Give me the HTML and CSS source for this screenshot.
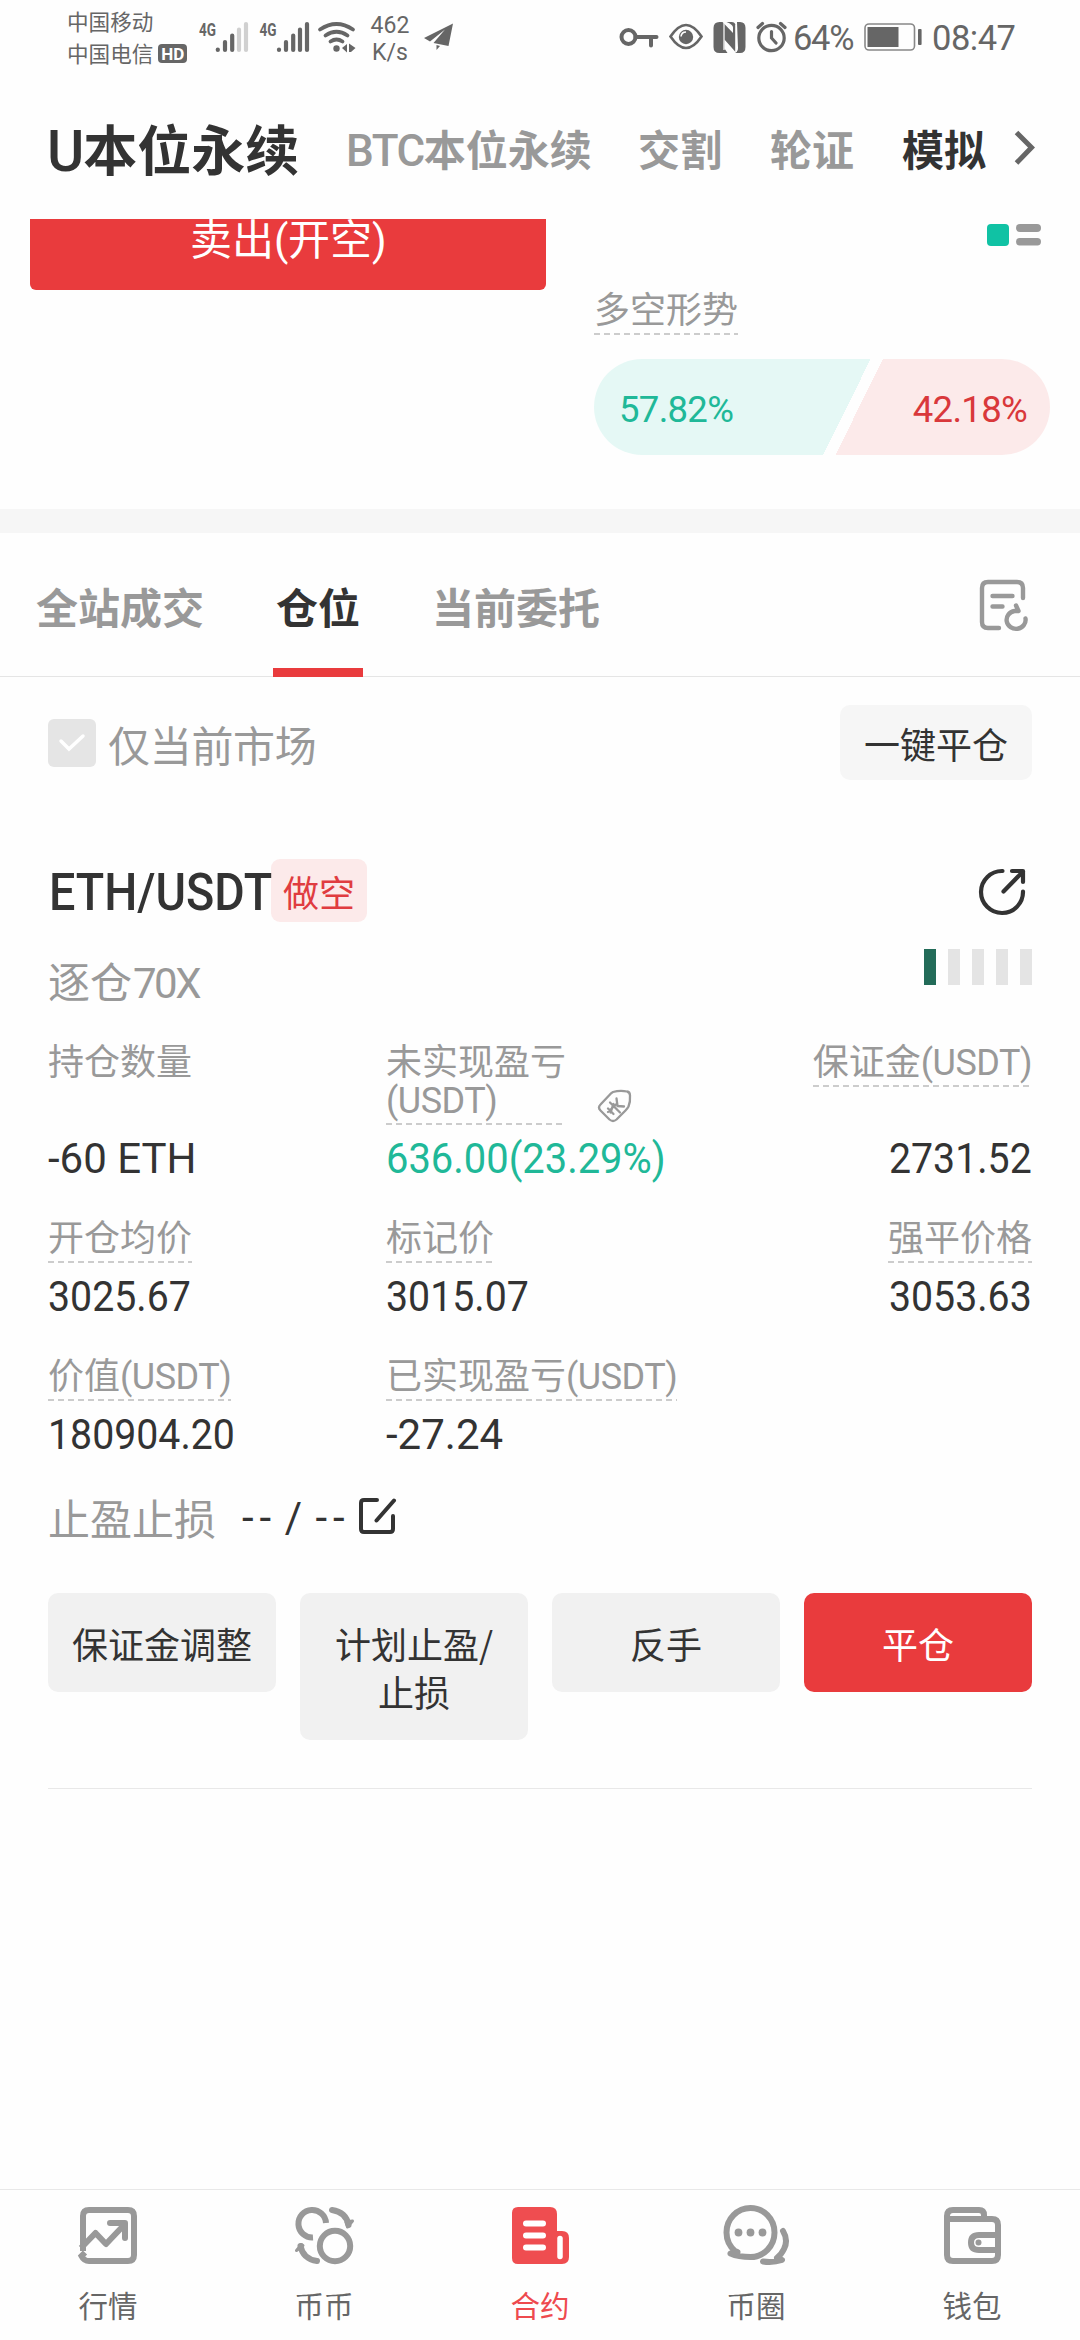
FILE: index.html
```html
<!DOCTYPE html>
<html lang="zh-CN">
<head>
<meta charset="utf-8">
<title>合约</title>
<link rel="stylesheet" href="styles.css">
</head>
<body>
<div class="screen">
  <header class="status">
    <div class="carriers">
      <div>中国移动</div>
      <div class="carrier2">中国电信<span class="hd">HD</span></div>
    </div>
    <svg class="sig" width="50" height="32" viewBox="199 21 50 32"><text x="199" y="36" class="g4" textLength="17" lengthAdjust="spacingAndGlyphs">4G</text><g stroke="#666" stroke-width="4.2" stroke-linecap="round"><path d="M217.8 49.6v.4M225 42v8M232.2 35.500v14.500"/><path stroke="#d0d0d0" d="M239 29.500V50M246 24v26"/></g></svg>
    <svg class="sig2" width="51" height="32" viewBox="259 21 51 32"><text x="259.500" y="36" class="g4" textLength="17" lengthAdjust="spacingAndGlyphs">4G</text><g stroke="#666" stroke-width="4.2" stroke-linecap="round"><path d="M279 49.600v.4M286 42v8M293.200 35.500v14.500M300 29.500V50M307 24v26"/></g></svg>
    <svg class="wifi" width="38" height="32" viewBox="318 21 38 32" fill="none" stroke="#666" stroke-width="3.800" stroke-linecap="round"><path d="M320 29.500Q336.500 18.500 353 29.500M325.500 35.500Q336.500 28 347.500 35.500M330.500 41.500Q336.500 37.500 342.500 41.500"/><circle cx="336.500" cy="48.500" r="3.200" fill="#666" stroke="none"/><path fill="#666" stroke="none" d="M342 48l5-4v8.500zM349 43.500l6.500 4.500-4.500 4h-2z"/></svg>
    <div class="speed"><div>462</div><div>K/s</div></div>
    <svg class="plane" width="30" height="28" viewBox="424 24 30 28" fill="#666"><path d="M453 24.500 424 39l6 3.500 15-12-11.500 13.500 15 3z"/><path d="M436.500 46l3.500 1-3.500 4z"/></svg>
    <span class="grow"></span>
    <svg class="key" width="39" height="20" viewBox="618.500 27 39 20" fill="none" stroke="#666" stroke-width="4"><circle cx="628" cy="37" r="7"/><path d="M635 37h21M650.500 37v8.500" stroke-linecap="round"/></svg>
    <svg class="eye" width="34" height="28" viewBox="668.500 23 34 28"><path d="M670 36.500Q685.500 13.500 701 36.500Q685.500 59.500 670 36.500z" fill="none" stroke="#666" stroke-width="2.600"/><circle cx="685.500" cy="37" r="7.200" fill="#666"/><path d="M680.500 36.500q.5-4.500 5-4.500" fill="none" stroke="#fff" stroke-width="1.600"/></svg>
    <svg class="nfc" width="33" height="33" viewBox="712.500 20.500 33 33"><path fill="#666" d="M719 21.500h3l11 11.500v11.500l-9-9.500v13l3 4.500h-8q-6 0-6-6V27.500q0-6 6-6zM726 21.500h5q4 0 4 4v26l-11.500-13v-9l9 9V27q0-3-6.500-5.500zM736.500 21.500h3q5.500 0 5.500 6v19q0 6-5.500 6h-5q3-1.500 3-5z"/><path d="M723.500 22.500v27M735.500 24.500v27" stroke="#fff" stroke-width="1.200"/></svg>
    <svg class="alarm" width="31" height="32" viewBox="755.500 21 31 32" fill="none" stroke="#666" stroke-width="3.200" stroke-linecap="round"><circle cx="771" cy="38" r="12.700"/><path d="M771 31.500v6.500l4.500 5M757.500 27.500l4.500-4M784.500 27.500l-4.500-4"/></svg>
    <span class="stext pct">64%</span>
    <svg class="bat" width="58" height="29" viewBox="864 23.500 58 29"><rect x="865" y="24.500" width="49.500" height="26" rx="4" fill="none" stroke="#888" stroke-width="1.600"/><rect x="867.500" y="27.500" width="31" height="20" fill="#666"/><rect x="918" y="29.500" width="3.600" height="16" rx="1" fill="#666"/></svg>
    <span class="stext time">08:47</span>
  </header>

  <nav class="markets">
    <span class="market big"><span class="lt">U</span>本位永续</span>
    <span class="market btc"><span class="lt">BTC</span>本位永续</span>
    <span class="market">交割</span>
    <span class="market">轮证</span>
    <span class="market sel">模拟</span>
    <svg width="22" height="36" viewBox="0 0 22 36" fill="none" stroke="#666" stroke-width="5"><path d="M2.500 2.500 17.500 17.500 2.500 33"/></svg>
  </nav>

  <section class="trade">
    <div class="sell">卖出<span class="lt">(</span>开空<span class="lt">)</span></div>
    <div class="trend">
      <svg class="layout" width="55" height="24" viewBox="0 0 55 24"><rect x="0" y="1" width="22" height="22" rx="4" fill="#10c2a4"/><g fill="#999"><rect x="29" y="1" width="25" height="8" rx="4"/><rect x="29" y="15" width="25" height="7.500" rx="3.700"/></g></svg>
      <span class="label">多空形势</span>
      <div class="ratio">
        <span class="num long">57.82%</span>
        <span class="num short">42.18%</span>
      </div>
    </div>
  </section>

  <nav class="tabs">
    <span class="tab">全站成交</span>
    <span class="tab on">仓位</span>
    <span class="tab">当前委托</span>
    <svg class="history" width="50" height="52" viewBox="979 579 50 52" fill="none" stroke="#999" stroke-width="4.400" stroke-linecap="round" stroke-linejoin="round"><path d="M999 628H988q-6 0-6-6V588q0-6 6-6h29q6 0 6 6v10M992.500 596h20M992.500 606.500h10"/><path d="M1016 605.500l2.500 5.500h-4a9.500 9 0 1 0 11 7.500"/></svg>
  </nav>

  <div class="filter">
    <span class="check"><svg width="28" height="20" viewBox="0 0 28 20" fill="none" stroke="#fff" stroke-width="3.500" stroke-linecap="round"><path d="M3 8l8 8L25 3"/></svg></span>
    <span class="only">仅当前市场</span>
    <span class="close-all">一键平仓</span>
  </div>

  <main class="position">
    <div class="head">
      <span class="pair"><span class="narrow">ETH/USDT</span></span><span class="side">做空</span>
      <svg class="share" width="50" height="50" viewBox="977 867 50 50" fill="none" stroke="#333" stroke-width="4.200" stroke-linecap="round" stroke-linejoin="round"><path d="M1002.500 871a21 21 0 1 0 20.500 20.500M1003.500 891.500l19.500-20M1012 871h11v11"/></svg>
    </div>
    <div class="lever">
      <span>逐仓<span class="lt lv">70X</span></span>
      <span class="risk"><i class="hit"></i><i></i><i></i><i></i><i></i></span>
    </div>

    <div class="grid">
      <div class="cell"><span class="label plain">持仓数量</span><span class="value amount">-60 ETH</span></div>
      <div class="cell">
        <span class="pnl"><span class="label two">未实现盈亏<br><span class="lt">(USDT)</span></span>
        <svg width="36" height="36" viewBox="596 1089 36 36" fill="none" stroke="#999" stroke-width="2.300" stroke-linejoin="round" stroke-linecap="round"><path d="M612 1092q7-2 14-.5q3 .5 3 4q.5 6-1.500 11q-1 2-3 4l-9 9q-3.500 3-7 0l-9-9q-3-3 0-6l8.500-9q2-2.500 4-3.500z"/><path d="M609 1102.500l10 10M607 1108.500l5.500 5.500M612.500 1104l-3 8.500M607 1112l9-8.500M615.500 1098.500l1 7.500 6.500.5"/></svg></span>
        <span class="value up">636.00(23.29%)</span>
      </div>
      <div class="cell right"><span class="label">保证金<span class="lt">(USDT)</span></span><span class="value">2731.52</span></div>

      <div class="cell"><span class="label">开仓均价</span><span class="value">3025.67</span></div>
      <div class="cell"><span class="label">标记价</span><span class="value">3015.07</span></div>
      <div class="cell right"><span class="label">强平价格</span><span class="value">3053.63</span></div>

      <div class="cell"><span class="label">价值<span class="lt">(USDT)</span></span><span class="value">180904.20</span></div>
      <div class="cell"><span class="label">已实现盈亏<span class="lt">(USDT)</span></span><span class="value realized">-27.24</span></div>
    </div>

    <div class="tpsl">
      <span class="name">止盈止损</span><span class="dashes">-- / --</span>
      <svg width="40" height="40" viewBox="357 1495 40 40" fill="none" stroke="#333" stroke-width="4" stroke-linecap="round" stroke-linejoin="round"><path d="M377 1499h-13q-3 0-3 3v26q0 3 3 3h26q3 0 3-3v-13M394 1499.500l-17.500 20"/></svg>
    </div>

    <div class="actions">
      <span class="btn">保证金调整</span>
      <span class="btn">计划止盈/<br>止损</span>
      <span class="btn">反手</span>
      <span class="btn red">平仓</span>
    </div>
  </main>

  <footer class="bottom">
    <div class="item">
      <svg width="68" height="64" viewBox="74 2204 68 64" fill="none" stroke="#999" stroke-width="6"><path d="M83 2251V2216q0-6 6-6h39q6 0 6 6v39q0 6-6 6H89q-5 0-7.500-5l3.500-3.500"/><path d="M81 2248l14.500-15L106 2244l19-20" stroke-linejoin="round"/><path d="M110 2223h15v15" stroke-linecap="round" stroke-linejoin="round"/></svg>
      <span>行情</span>
    </div>
    <div class="item">
      <svg width="68" height="64" viewBox="290 2204 68 64" fill="none" stroke="#999" stroke-width="6"><circle cx="335" cy="2246" r="15.200"/><path d="M313 2237.500a13.800 13.800 0 1 1 13-14.500"/><path d="M332 2210q14 2 16.500 15" stroke-linecap="round"/><path d="M317 2261q-14-2-16.500-15" stroke-linecap="round"/><path fill="#999" stroke-width="3" stroke-linejoin="round" d="M346 2222l6.500-1-5 6zM303 2245.500l-6.500 5 5-6z"/></svg>
      <span>币币</span>
    </div>
    <div class="item active">
      <svg width="68" height="64" viewBox="506 2204 68 64"><path fill="#ef4d50" d="M518 2207h32q7 0 7 7v17h5q7 0 7 7v19q0 7-7 7h-44q-6 0-6-6v-45q0-6 6-6z"/><path d="M526 2223.500h17M526 2235.500h17M526 2247.500h17" stroke="#fff" stroke-width="6" stroke-linecap="round"/><path d="M560 2238.500v18" stroke="#fff" stroke-width="5.500" stroke-linecap="round"/></svg>
      <span>合约</span>
    </div>
    <div class="item">
      <svg width="68" height="64" viewBox="722 2204 68 64" fill="none" stroke="#999" stroke-width="6" stroke-linecap="round" stroke-linejoin="round"><path d="M735.500 2251.500q-9-7.500-9-19a24 24.500 0 1 1 24 24.500q-12 0-20-3.500 6 1.500 7-1.500z"/><path d="M783 2231q5.500 9 1 18-3 6-7 9l5 2q-9 3-19 1.500"/><g fill="#999" stroke="none"><circle cx="738.500" cy="2232.500" r="3.900"/><circle cx="750.500" cy="2232.500" r="3.900"/><circle cx="762.500" cy="2232.500" r="3.900"/></g></svg>
      <span>币圈</span>
    </div>
    <div class="item">
      <svg width="68" height="64" viewBox="938 2204 68 64" fill="none" stroke="#999" stroke-width="6"><path d="M984 2218v-3q0-5-5-5h-26q-6 0-6 6v39q0 6 6 6h39q6 0 6-6v-30q0-6-6-6h-45"/><path d="M998 2235h-19q-8 0-8 7.500t8 7.500h19"/><circle cx="978.500" cy="2242.500" r="3" fill="#999" stroke="none"/></svg>
      <span>钱包</span>
    </div>
  </footer>
</div>
</body>
</html>
```

FILE: styles.css
```css
* { box-sizing: border-box; }
body { margin: 0; background: #fff; }
svg { display: block; flex: none; overflow: visible; }

.screen {
  width: 1080px;
  height: 2340px;
  display: flex;
  flex-direction: column;
  overflow: hidden;
  background: #fefefe;
  color: #333;
  font-family: "Noto Sans CJK SC", sans-serif;
  white-space: nowrap;
}
.lt { font-family: Roboto, sans-serif; line-height: 0; font-weight: 400; letter-spacing: -.5px; }

/* status bar */
.status {
  height: 74px;
  padding: 0 62px 0 67px;
  display: flex;
  align-items: center;
  color: #666;
  font-family: Roboto, "Noto Sans CJK SC", sans-serif;
}
.carriers {
  width: 132px;
  font-family: "Noto Sans CJK SC", sans-serif;
  font-size: 21.600px;
  line-height: 32px;
}
.carrier2 { display: flex; align-items: center; }
.hd {
  width: 29px;
  height: 19px;
  margin-left: 5px;
  border-radius: 4px;
  background: #666;
  color: #fff;
  font: 700 17px/20px Roboto, sans-serif;
  text-align: center;
}
.g4 { font: 700 19px Roboto, sans-serif; fill: #666; }
.sig2 { margin-left: 10px; }
.wifi { margin-left: 8px; }
.speed { width: 44px; margin-left: 12px; margin-top: 3px; font-size: 23px; line-height: 27px; text-align: center; }
.plane { margin-left: 12px; }
.grow { flex: 1; }
.eye { margin-left: 11px; }
.nfc { margin-left: 10px; }
.alarm { margin-left: 10px; }
.stext { font-size: 34.500px; line-height: 40px; padding-top: 2px; }
.pct { width: 77px; padding-left: 6px; letter-spacing: -1.300px; }
.time { width: 96px; padding-left: 10px; letter-spacing: -.5px; }

/* market switcher */
.markets {
  height: 145px;
  padding: 3px 45px 0 47px;
  display: flex;
  align-items: center;
  gap: 48px;
  font-weight: 700;
}
.market { font-size: 42px; color: #999; line-height: 60px; }
.market .lt { font-size: 44px; font-weight: 500; letter-spacing: -1.500px; }
.market.big { width: 251px; font-size: 54px; color: #333; }
.market.big .lt { font-size: 57px; letter-spacing: -1px; }
.market.btc { width: 244px; }
.market.sel { color: #333; }
.markets svg { margin-left: -20px; }

/* order form tail */
.trade {
  height: 290px;
  padding: 0 30px;
  display: flex;
  justify-content: space-between;
}
.sell {
  width: 516px;
  height: 71px;
  border-radius: 0 0 6px 6px;
  background: #e93b3d;
  color: #fff;
  font-size: 42px;
  line-height: 35px;
  text-align: center;
}
.trend { width: 456px; display: flex; flex-direction: column; align-items: flex-start; padding-top: 4px; }
.layout { align-self: flex-end; margin-right: 8px; }

.label {
  padding-bottom: 9px;
  font-size: 36px;
  line-height: 38px;
  color: #999;
  background: repeating-linear-gradient(90deg, #ccc 0 6px, transparent 6px 10px) left bottom / 100% 2px no-repeat;
}
.label.plain { background: none; }
.trend .label { margin-top: 41px; }
.ratio {
  width: 456px;
  height: 96px;
  margin-top: 24px;
  padding: 0 23px 0 25px;
  display: flex;
  align-items: center;
  justify-content: space-between;
  border-radius: 48px;
  background: linear-gradient(116.300deg, #e5f8f5 0 248px, #fefefe 248px 259px, #fceaea 259px);
}
.num { font: 400 36.500px/40px Roboto, sans-serif; padding-top: 5px; letter-spacing: -.7px; }
.long { color: #20b898; }
.short { color: #d9383b; }

/* section tabs */
.tabs {
  height: 168px;
  border-top: 24px solid #f6f6f6;
  border-bottom: 1px solid #e5e5e5;
  padding: 0 51px 0 33px;
  display: flex;
  font-size: 42px;
  font-weight: 700;
  color: #999;
}
.tab { height: 144px; padding: 0 3px; line-height: 145px; margin-right: 66px; }
.tab.on { width: 90px; color: #333; border-bottom: 9px solid #e93b3d; }
.history { margin: 46px 0 0 auto; }

/* filter row */
.filter { margin-top: 28px; height: 75px; padding: 0 48px; display: flex; align-items: center; }
.check { width: 48px; height: 48px; border-radius: 6px; background: #e5e5e5; display: grid; place-items: center; }
.only { margin-left: 12px; padding-top: 2px; font-size: 42px; letter-spacing: -.3px; color: #999; }
.close-all {
  margin-left: auto;
  width: 192px;
  height: 75px;
  border-radius: 10px;
  background: #f6f6f6;
  font-size: 36px;
  line-height: 77px;
  text-align: center;
}

/* position card */
.position { margin: 79px 48px 0; height: 930px; border-bottom: 1px solid #e8e8e8; flex: none; }
.head { display: flex; align-items: center; height: 63px; }
.pair { width: 223px; padding: 5px 0 0 1px; font: 500 51px/60px Roboto, sans-serif; }
.narrow { display: inline-block; transform: scaleX(.915); transform-origin: left; }
.side {
  width: 96px;
  height: 63px;
  border-radius: 9px;
  background: #fceaea;
  color: #e03c40;
  font-size: 36px;
  line-height: 65px;
  text-align: center;
}
.share { margin: 2px 5px 0 auto; }
.lever { margin-top: 27px; height: 55px; display: flex; justify-content: space-between; font-size: 42px; line-height: 62px; color: #999; }
.lv { margin-left: 1px; letter-spacing: -2.500px; }
.risk { display: flex; gap: 12px; }
.risk i { width: 12px; height: 36px; background: #e4e4e4; }
.risk .hit { background: #236b58; }

.grid { margin-top: 36px; display: grid; grid-template-columns: 338px 350px 1fr; row-gap: 36px; }
.cell { display: flex; flex-direction: column; justify-content: space-between; align-items: flex-start; }
.cell.right { align-items: flex-end; }
.value {
  margin-top: 11px;
  padding-top: 2px;
  font: 400 42px/42px Roboto, sans-serif;
  color: #333;
  transform: scaleX(.935);
  transform-origin: left;
}
.right .value { transform-origin: right; }
.value.up { color: #20b898; transform: scaleX(.95); }
.value.amount { transform: none; }
.value.realized { transform: none; }
.pnl { display: flex; align-items: flex-end; gap: 31px; }
.label.two { width: 180px; }

.tpsl { margin-top: 36px; height: 48px; display: flex; align-items: center; font-size: 42px; }
.name { color: #999; }
.dashes { width: 119px; padding: 4px 0 0 26px; font: 400 42px/48px Roboto, sans-serif; letter-spacing: 6px; word-spacing: -9px; margin-right: 22px; }

.actions { margin-top: 53px; display: flex; align-items: flex-start; gap: 24px; }
.btn {
  flex: 1;
  padding: 26px 0 25px;
  border-radius: 10px;
  background: #f1f1f1;
  font-size: 36px;
  line-height: 48px;
  text-align: center;
}
.btn.red { background: #e93b3d; color: #fff; }

/* bottom navigation */
.bottom { margin-top: auto; height: 151px; border-top: 1px solid #e8e8e8; display: flex; flex: none; }
.item { flex: 1; padding-top: 14px; display: flex; flex-direction: column; align-items: center; font-size: 29.500px; line-height: 44px; color: #666; }
.item span { margin-top: 14px; }
.item.active { color: #ee4a4e; }
```
